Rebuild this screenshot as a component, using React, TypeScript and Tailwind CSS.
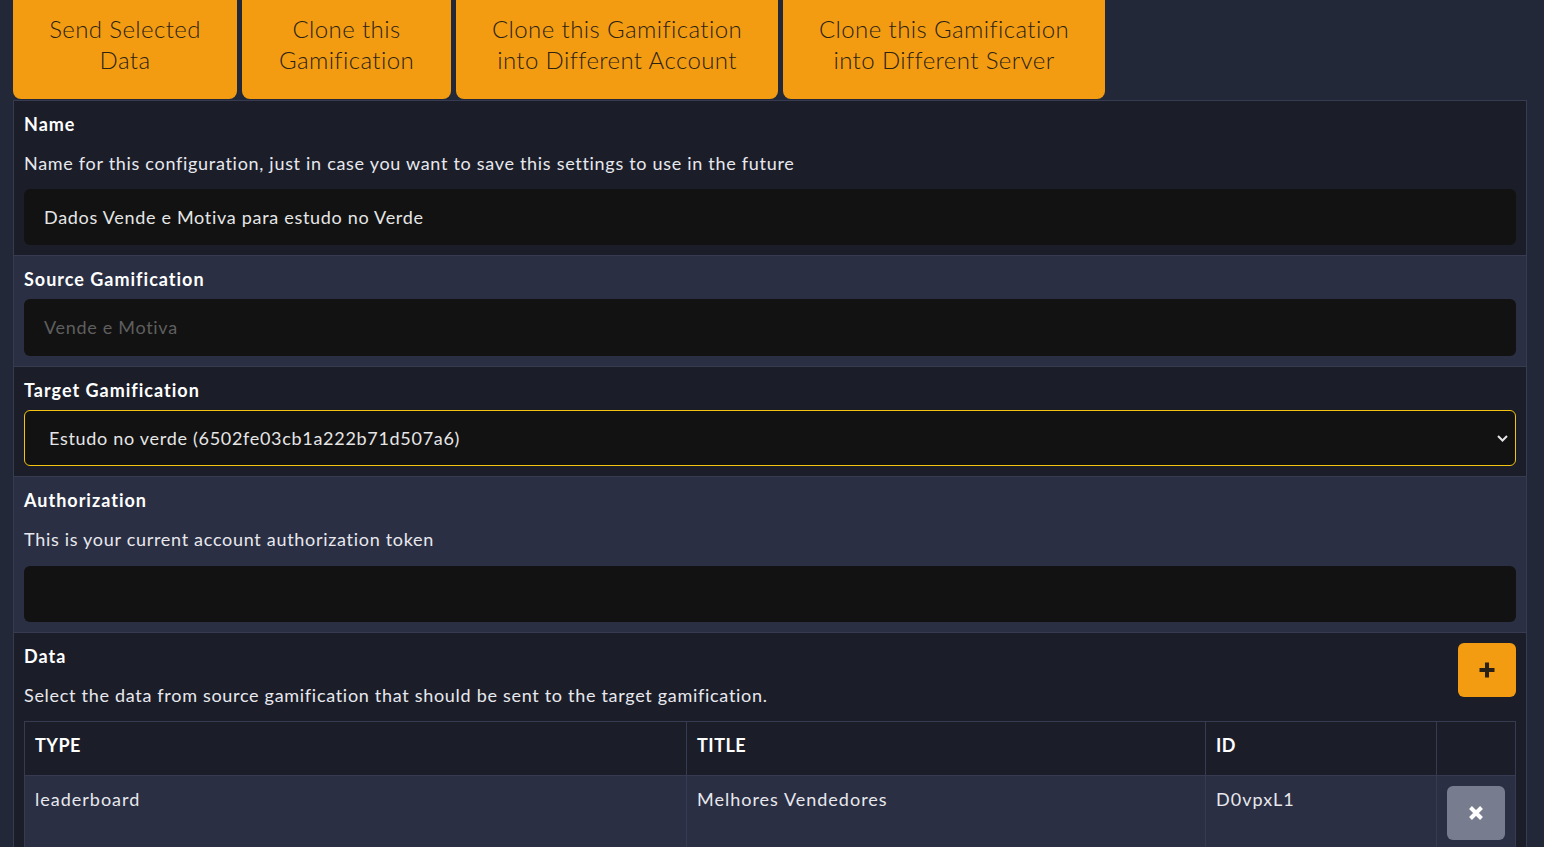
import React from "react";

const FONT = { fontFamily: "Lato, 'Noto Sans', sans-serif" };

function TopButton({ lines, width }: { lines: string[]; width: string }) {
  return (
    <div
      className={`${width} h-[99px] shrink-0 cursor-pointer rounded-b-[8px] bg-[#f39c12] pt-[13px] text-center text-[24px] font-light leading-[31px] tracking-[0.4px] text-[#2b2214]`}
    >
      {lines.map((l) => (
        <div key={l}>{l}</div>
      ))}
    </div>
  );
}

function Section({
  label,
  description,
  light,
  children,
  extra,
  gap = "mt-[12px]",
}: {
  label: string;
  description?: string;
  light?: boolean;
  children?: React.ReactNode;
  extra?: React.ReactNode;
  gap?: string;
}) {
  return (
    <div
      className={`border-b border-[#363b52] px-[10px] pt-[10px] pb-[10px] last:border-b-0 ${light ? "bg-[#2a2f43]" : "bg-[#1b1e29]"}`}
    >
      <div className="flex items-start justify-between">
        <div>
          <div className="text-[18px] font-bold leading-[27px] tracking-[1px] text-white">{label}</div>
          {description && (
            <div className="mt-[12px] text-[18px] leading-[27px] tracking-[0.7px] text-[#e8e8ee]">{description}</div>
          )}
        </div>
        {extra}
      </div>
      <div className={description ? gap : "mt-[6px]"}>{children}</div>
    </div>
  );
}

function TextBox({ value, muted, tall }: { value?: string; muted?: boolean; tall?: boolean }) {
  return (
    <div
      className={`flex ${tall ? "h-[57px]" : "h-[56px]"} items-center rounded-[6px] bg-[#121212] px-[20px] text-[18px] tracking-[0.7px] ${muted ? "text-[#5f5f5f]" : "text-[#e6e6e6]"}`}
    >
      {value}
    </div>
  );
}

export default function App() {
  return (
    <div className="min-h-screen bg-[#222838] pl-[13px] pr-[17px]" style={FONT}>
      <div className="flex gap-[5px] pb-[1px]">
        <TopButton width="w-[224px]" lines={["Send Selected", "Data"]} />
        <TopButton width="w-[209px]" lines={["Clone this", "Gamification"]} />
        <TopButton width="w-[322px]" lines={["Clone this Gamification", "into Different Account"]} />
        <TopButton width="w-[322px]" lines={["Clone this Gamification", "into Different Server"]} />
      </div>

      <div className="border border-[#363b52]">
        <Section
          label="Name"
          description="Name for this configuration, just in case you want to save this settings to use in the future"
        >
          <TextBox value="Dados Vende e Motiva para estudo no Verde" />
        </Section>

        <Section label="Source Gamification" light>
          <TextBox value="Vende e Motiva" muted tall />
        </Section>

        <Section label="Target Gamification">
          <div className="flex h-[56px] items-center justify-between rounded-[6px] border border-[#f1c40f] bg-[#121212] pl-[24px] pr-[7px] text-[18px] tracking-[0.7px] text-[#e6e6e6]">
            <span>Estudo no verde (6502fe03cb1a222b71d507a6)</span>
            <svg width="11" height="7" viewBox="0 0 11 7" fill="none">
              <path d="M1 1l4.5 4.5L10 1" stroke="#e6e6e6" strokeWidth="2" />
            </svg>
          </div>
        </Section>

        <Section
          label="Authorization"
          description="This is your current account authorization token"
          light
          gap="mt-[13px]"
        >
          <TextBox />
        </Section>

        <Section
          label="Data"
          description="Select the data from source gamification that should be sent to the target gamification."
          gap="mt-[12px]"
          extra={
            <button className="flex h-[54px] w-[58px] items-center justify-center rounded-[6px] bg-[#f39c12]">
              <svg width="18" height="18" viewBox="0 0 18 18">
                <path d="M9 1.5v15M1.5 9h15" stroke="#2a2116" strokeWidth="4" />
              </svg>
            </button>
          }
        >
          <table className="w-full border-collapse text-left text-[18px] tracking-[1px]">
            <thead>
              <tr className="bg-[#1b1e29]">
                <th className="h-[54px] w-[662px] border border-[#363b52] px-[10px] pt-[10px] align-top font-bold tracking-[0.5px] text-white">TYPE</th>
                <th className="w-[519px] border border-[#363b52] px-[10px] pt-[10px] align-top font-bold tracking-[0.5px] text-white">TITLE</th>
                <th className="w-[231px] border border-[#363b52] px-[10px] pt-[10px] align-top font-bold tracking-[0.5px] text-white">ID</th>
                <th className="border border-[#363b52]"></th>
              </tr>
            </thead>
            <tbody>
              <tr className="bg-[#2a2f43] text-[#e8e8ee]">
                <td className="border border-[#363b52] px-[10px] pt-[10px] pb-[10px] align-top">leaderboard</td>
                <td className="border border-[#363b52] px-[10px] pt-[10px] align-top">Melhores Vendedores</td>
                <td className="border border-[#363b52] px-[10px] pt-[10px] align-top">D0vpxL1</td>
                <td className="border border-[#363b52] px-[10px] pt-[10px] pb-[10px] align-top">
                  <button className="flex h-[54px] w-[58px] items-center justify-center rounded-[6px] bg-[#787c8f]">
                    <svg width="16" height="16" viewBox="0 0 16 16">
                      <path d="M2.5 2.5l11 11M13.5 2.5l-11 11" stroke="#fff" strokeWidth="4" />
                    </svg>
                  </button>
                </td>
              </tr>
            </tbody>
          </table>
        </Section>
      </div>
    </div>
  );
}
